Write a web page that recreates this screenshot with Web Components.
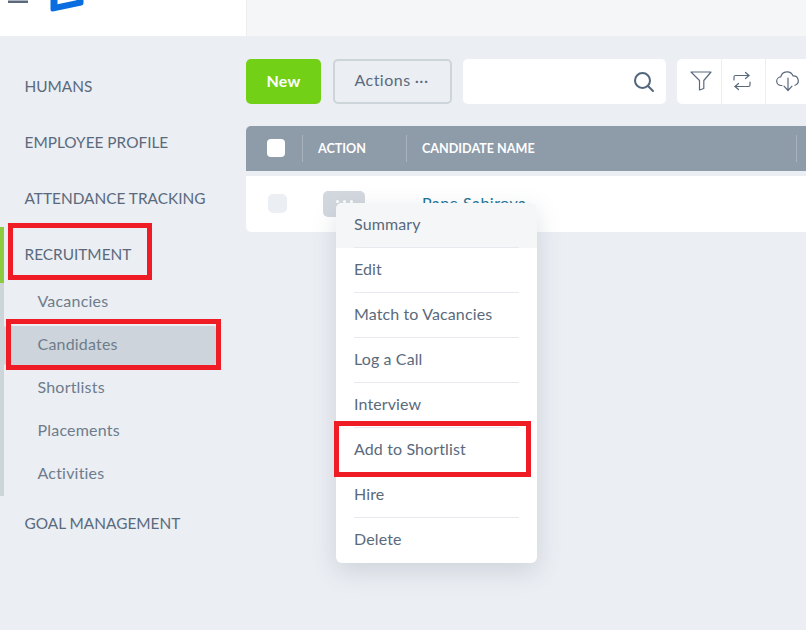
<!DOCTYPE html>
<html><head><meta charset="utf-8"><title>Candidates</title>
<style>
html,body{margin:0;padding:0;height:630px;overflow:hidden;background:#ebeef3;font-family:Lato,"Open Sans",sans-serif;color:#5a6a7c}
</style></head><body>
<app-shell>
  <app-header slot="header"></app-header>
  <side-nav slot="nav">
    <nav-item>HUMANS</nav-item>
    <nav-item>EMPLOYEE PROFILE</nav-item>
    <nav-item>ATTENDANCE TRACKING</nav-item>
    <nav-group>
      <nav-item slot="title">RECRUITMENT</nav-item>
      <sub-item>Vacancies</sub-item>
      <sub-item active>Candidates</sub-item>
      <sub-item>Shortlists</sub-item>
      <sub-item>Placements</sub-item>
      <sub-item>Activities</sub-item>
    </nav-group>
    <nav-item>GOAL MANAGEMENT</nav-item>
  </side-nav>
  <page-toolbar slot="main"></page-toolbar>
  <candidate-table slot="main"></candidate-table>
  <action-menu slot="overlay">
    <menu-row hover>Summary</menu-row>
    <menu-row>Edit</menu-row>
    <menu-row>Match to Vacancies</menu-row>
    <menu-row>Log a Call</menu-row>
    <menu-row>Interview</menu-row>
    <menu-row>Add to Shortlist</menu-row>
    <menu-row>Hire</menu-row>
    <menu-row last>Delete</menu-row>
  </action-menu>
  <red-mark slot="overlay" style="left:8px;top:223px;width:144px;height:57px"></red-mark>
  <red-mark slot="overlay" style="left:6px;top:319px;width:215px;height:51px"></red-mark>
  <red-mark slot="overlay" style="left:334px;top:421px;width:197px;height:56px"></red-mark>
</app-shell>
<script>
const def=(name,html)=>customElements.define(name,class extends HTMLElement{
  constructor(){super();this.attachShadow({mode:'open'}).innerHTML=html;}
});
def('app-shell',`<style>
:host{display:grid;grid-template-columns:246px 560px;grid-template-rows:36px 1fr;width:806px;height:630px;position:relative;overflow:hidden}
.h{grid-column:1/3}
.m{padding:23px 0 0;min-width:0;overflow:hidden}
</style>
<div class="h"><slot name="header"></slot></div>
<div><slot name="nav"></slot></div>
<div class="m"><slot name="main"></slot></div>
<slot name="overlay"></slot>`);
def('app-header',`<style>
:host{display:grid;grid-template-columns:247px 1fr;height:36px;background:#f5f6f8}
.l{background:#fff;border-right:1px solid #eceef2;overflow:hidden;box-sizing:border-box}
svg{display:block}
</style><div class="l"><svg width="246" height="36" viewBox="0 0 246 36">
<rect x="8" y="0.5" width="20" height="2.5" fill="#5a6a7c"/>
<path d="M50.5 -4V9.5a2 2 0 0 0 2.4 2L81.5 5.6a2.5 2.5 0 0 0 2-2.4V-4H76.500V.2L57.500 4.200V-4Z" fill="#0a6ee0"/>
</svg></div><div></div>`);
def('side-nav',`<style>:host{display:block;padding-top:23px}</style><slot></slot>`);
def('nav-item',`<style>
:host{display:flex;align-items:center;height:56px;padding-left:24.500px;font:400 15.400px/1 Lato,sans-serif;color:#5a6a7c;box-sizing:border-box}
</style><slot></slot>`);
def('nav-group',`<style>
:host{display:block;position:relative;height:269px}
.bar{position:absolute;left:0;top:0;width:4px;height:269px;background:#ced5d9}
.g{position:absolute;left:0;top:0;width:4px;height:56px;background:#8ccb3f}
.subs{display:block;margin-top:-2px}
</style><div class="bar"></div><div class="g"></div><slot name="title"></slot><div class="subs"><slot></slot></div>`);
def('sub-item',`<style>
:host{display:block;height:43px;padding:2px 30px 2px 4px;box-sizing:border-box;font:400 16px/1 Lato,sans-serif;letter-spacing:.2px;color:#6e7c8b}
.r{display:flex;align-items:center;height:39px;padding:0 0 4px 33.500px;box-sizing:border-box;border-radius:2px}
:host([active]) .r{background:#cdd4db}
</style><div class="r"><slot></slot></div>`);
const ic={
filter:`<svg width="22" height="20" viewBox="0 0 22 20" fill="none" stroke="#5a6a7c" stroke-width="1.200" stroke-linejoin="round"><path d="M1 1H21L13.800 9.500V17.500L9.500 19V9.500Z"/></svg>`,
swap:`<svg width="18" height="20" viewBox="0 0 18 20" fill="none" stroke="#5a6a7c" stroke-width="1.200" stroke-linecap="round" stroke-linejoin="round"><path d="M12.500 1.500L16 4.500L12.500 7.500"/><path d="M16 4.500H2.500Q1 4.500 1 6V9"/><path d="M5.500 12.500L2 15.500L5.500 18.500"/><path d="M2 15.500H15.500Q17 15.500 17 14V11"/></svg>`,
cloud:`<svg width="24" height="22" viewBox="0 0 24 22" fill="none" stroke="#5a6a7c" stroke-width="1.200" stroke-linecap="round" stroke-linejoin="round"><path d="M6 15.500H5.200A4.300 4.300 0 0 1 4.800 6.900A6.400 6.400 0 0 1 17 5.800A4.900 4.900 0 0 1 19 15.300"/><path d="M12 8V20M8 16.200L12 20.500L16 16.200"/></svg>`,
search:`<svg width="22" height="22" viewBox="0 0 22 22" fill="none" stroke="#52657a" stroke-width="2" stroke-linecap="round"><circle cx="9.500" cy="9.500" r="7.500"/><path d="M15 15L20 20"/></svg>`};
def('page-toolbar',`<style>
:host{display:flex;height:45px;align-items:stretch;width:560px}
div{flex:none}
.new{width:75px;background:#72d016;color:#fff;border-radius:5px;display:flex;align-items:center;justify-content:center;padding-bottom:3px;box-sizing:border-box;font:700 16px Lato,sans-serif;letter-spacing:.2px;margin-right:12px}
.act{width:119px;box-sizing:border-box;border:2px solid #ced5da;border-radius:5px;background:#ebeef3;display:flex;align-items:center;justify-content:center;gap:4px;padding:0 2px 4px 0;font:400 16px Lato,sans-serif;color:#5a6a7c;letter-spacing:.5px;margin-right:11px}
.s{width:203px;background:#fff;border-radius:5px;display:flex;align-items:center;justify-content:flex-end;padding-right:11px;box-sizing:border-box;margin-right:11px}
.grp{display:flex;background:#fff;border-radius:5px 0 0 5px;width:129px}
.grp div{display:flex;align-items:center;box-sizing:border-box;border-right:1px solid #ebeef3}
.a{width:45px;padding:0 0 1px 13px}
.b{width:44px;padding:0 0 1px 11px}
.grp .c{width:40px;padding:0 0 2px 10px;border-right:0}
</style><div class="new">New</div><div class="act"><span>Actions</span><span>···</span></div>
<div class="s">${ic.search}</div>
<div class="grp"><div class="a">${ic.filter}</div><div class="b">${ic.swap}</div><div class="c">${ic.cloud}</div></div>`);
def('candidate-table',`<style>
:host{display:block;margin-top:22px;width:560px}
.hd{display:flex;align-items:center;height:45px;background:#8e9ba8;border-radius:5px 0 0 0;color:#fff;font:700 12.600px Lato,sans-serif}
.hd>div{height:27px;display:flex;align-items:center;box-sizing:border-box;border-right:1px solid #a9b3bd;padding-bottom:1px;flex:none}
.hd .c1{width:57px;padding-left:21px}
.hd .c2{width:104px;padding-left:15px}
.hd .c3{width:390px;padding-left:15px}
.cb{width:18px;height:18px;border-radius:4px;background:#fff;display:block}
.row{display:flex;align-items:center;height:56px;margin-top:5px;background:#fff;border-radius:0 0 0 5px}
.row>div{display:flex;align-items:center;flex:none}
.rc1{width:57px;padding:0 0 2px 22px;box-sizing:border-box}
.rc1 i{display:block;width:19px;height:19px;border-radius:5px;background:#ebeef3}
.rc2{width:119px;box-sizing:border-box;padding-left:20px}
.rc2 b{display:flex;justify-content:center;gap:4px;padding-top:9px;box-sizing:border-box;width:42px;height:26px;border-radius:5px;background:#d3d8df}
.rc2 s{display:block;width:3px;height:3px;border-radius:50%;background:#fff}
.nm{font:400 16px Lato,sans-serif;letter-spacing:.45px;color:#1d7396;position:relative;top:-2px}
</style>
<div class="hd"><div class="c1"><span class="cb"></span></div><div class="c2">ACTION</div><div class="c3">CANDIDATE NAME</div></div>
<div class="row"><div class="rc1"><i></i></div><div class="rc2"><b><s></s><s></s><s></s></b></div><div class="nm">Pane Sabirova</div></div>`);
def('action-menu',`<style>
:host{position:absolute;left:336px;top:203px;width:201px;display:block;background:#fff;border-radius:6px;box-shadow:0 8px 24px rgba(90,106,124,.2);overflow:hidden}
</style><slot></slot>`);
def('menu-row',`<style>
:host{display:block;height:45px;font:400 16px Lato,sans-serif;letter-spacing:.12px;color:#5a6a7c;padding:0 18px;box-sizing:border-box}
:host([hover]){background:#f5f6f8}
.t{display:flex;align-items:center;border-bottom:1px solid #e6e9ed;padding-bottom:4px;box-sizing:border-box;height:45px}
:host([last]) .t{border-bottom:0}
</style><div class="t"><slot></slot></div>`);
def('red-mark',`<style>
:host{position:absolute;display:block;box-sizing:border-box;border:5px solid #ef1c25}
</style>`);
</script>
</body></html>
